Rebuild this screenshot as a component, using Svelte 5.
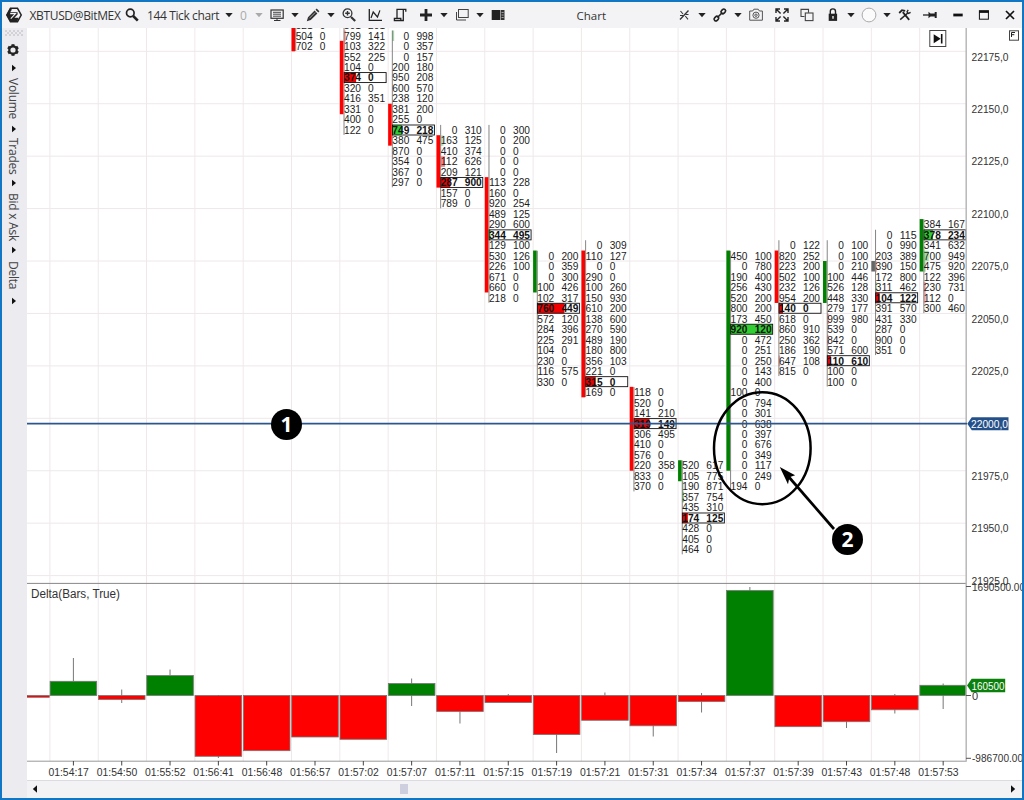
<script lang="ts">
	const ROW = 10.486;
	const STEP = 48.32;

	const colX = (i: number) => 49.9 + STEP * i;
	const rowY = (r: number) => 56.5 + ROW * r;

	// col, first row, bar [from, to, color], poc [row, fill width, color], cells "bid ask"
	const clusters = [
		{ col: 5, start: -3, bar: [-3, -1, 'red'], poc: null, cells: '521 0|504 0|702 0' },
		{ col: 6, start: -3, bar: [-1, 5, 'red'], poc: [2, 12, 'red'], cells: '801 201|799 141|103 322|552 225|104 0|374 0|320 0|416 351|331 0|400 0|122 0' },
		{ col: 7, start: -2, bar: [5, 8, 'red'], poc: [7, 9.5, 'green'], cells: '0 998|0 357|0 157|200 180|950 208|600 570|238 120|381 200|255 0|749 218|380 475|870 0|354 0|367 0|297 0' },
		{ col: 8, start: 7, bar: [8, 12, 'red'], poc: [12, 9.5, 'red'], cells: '0 310|163 125|410 374|112 626|209 121|287 900|157 0|789 0' },
		{ col: 9, start: 7, bar: [12, 22, 'red'], poc: [17, 1.5, 'green'], cells: '0 300|0 200|0 0|0 0|0 0|113 228|160 0|920 254|489 125|290 600|344 495|129 100|530 126|226 100|671 0|660 0|218 0' },
		{ col: 10, start: 19, bar: [19, 22, 'green'], poc: [24, 27, 'red'], cells: '0 200|0 359|0 300|100 426|102 317|760 449|572 120|284 396|225 291|104 0|230 0|116 575|330 0' },
		{ col: 11, start: 18, bar: [19, 32, 'red'], poc: [31, 10, 'red'], cells: '0 309|110 127|0 0|290 0|100 260|150 930|610 200|138 600|270 590|489 190|180 800|356 103|221 0|315 0|169 0' },
		{ col: 12, start: 32, bar: [32, 39, 'red'], poc: [35, 15.5, 'red'], cells: '118 0|520 0|141 210|319 149|306 495|410 0|576 0|220 358|833 0|370 0' },
		{ col: 13, start: 39, bar: [39, 40, 'green'], poc: [44, 5.5, 'red'], cells: '520 617|105 775|190 871|357 754|435 310|174 125|428 0|405 0|464 0' },
		{ col: 14, start: 19, bar: [19, 39, 'green'], poc: [26, 42, 'green'], cells: '450 100|0 780|190 400|256 430|520 200|800 200|173 450|920 120|0 472|0 251|0 250|0 143|0 400|100 0|0 794|0 301|0 638|0 397|0 676|0 349|0 117|0 249|194 0' },
		{ col: 15, start: 18, bar: [19, 23, 'red'], poc: [24, 4, 'red'], cells: '0 122|820 252|223 200|502 100|232 126|954 200|140 0|618 0|860 910|250 362|186 190|647 108|815 0' },
		{ col: 16, start: 18, bar: [20, 23, 'green'], poc: [29, 3.5, 'red'], cells: '0 100|0 100|0 210|100 446|526 128|448 330|279 177|999 980|539 0|842 0|571 600|110 610|100 0|100 0' },
		{ col: 17, start: 17, bar: [20, 20, 'gray'], poc: [23, 4, 'red'], cells: '0 115|0 990|203 389|390 150|172 800|311 462|104 122|391 570|431 330|287 0|900 0|351 0' },
		{ col: 18, start: 16, bar: [16, 20, 'green'], poc: [17, 9, 'green'], cells: '384 167|378 234|341 632|700 949|475 920|122 396|230 731|112 0|300 460' }
	].map((c) => ({
		...c,
		x: colX(c.col),
		rows: c.cells.split('|').map((s, i) => {
			const [bid, ask] = s.split(' ');
			return { r: c.start + i, bid, ask };
		})
	}));

	// weak volume shading: col, row, width, color
	const tints: [number, number, number, string][] = [
		[6, -2, 2, '#f2a0a0'], [6, -1, 1.5, '#f2a0a0'], [7, -2, 2, '#a5d5a8'],
		[8, 8, 3, '#b9e0bb'], [8, 10, 4.5, '#ff7f7f'], [13, 41, 1.5, '#a5d5a8'],
		[13, 42, 2, '#8fd092'], [15, 29, 1.5, '#f2a0a0'], [16, 25, 2, '#f5a5a5'],
		[16, 27, 1.5, '#f2a0a0'], [17, 22, 1.5, '#a5d5a8'], [17, 20, 1.5, '#f2a0a0'],
		[18, 19, 5, '#9bdc9f'], [18, 20, 2, '#a5d5a8'], [18, 22, 2, '#f2a0a0'], [18, 23, 2.5, '#f9b5b5']
	];

	const prices = ['22175,0', '22150,0', '22125,0', '22100,0', '22075,0', '22050,0', '22025,0', '', '21975,0', '21950,0', '21925,0'];

	const times = [
		'01:54:17', '01:54:50', '01:55:52', '01:56:41', '01:56:48', '01:56:57', '01:57:02',
		'01:57:07', '01:57:11', '01:57:15', '01:57:19', '01:57:21', '01:57:31', '01:57:34',
		'01:57:37', '01:57:39', '01:57:43', '01:57:48', '01:57:53'
	];

	// body end, wick top, wick bottom
	const ZERO = 695.5;
	const deltas = [
		[681.3, 658, 681], [699.5, 689.5, 703], [675.5, 669.5, 675], [756.3, 695, 758],
		[750.7, 696, 750], [737, 696, 736], [739.3, 696, 739], [683.5, 678.5, 706],
		[711.5, 696, 723.5], [702.6, 694, 702], [734.6, 696, 753], [720.3, 692.5, 720],
		[725.8, 696, 736.5], [701.6, 693, 712.5], [590.5, 587, 600], [726.7, 696, 726],
		[721.7, 696, 728], [709.8, 694, 713.5], [685.3, 683.5, 709]
	];
</script>

{#snippet caret(muted = false)}
	<svg class="caret" class:muted viewBox="0 0 8 8"><path d="M0.3 2h7.4L4 6.2z" fill="currentColor" /></svg>
{/snippet}

{#snippet sideCaret()}
	<svg class="side-caret" viewBox="0 0 8 8"><path d="M2 0.8v6.4L6 4z" fill="#111" /></svg>
{/snippet}

<div class="window">
	<header class="toolbar">
		<div class="left">
			<svg class="icon logo" viewBox="0 0 18 18">
				<path d="M5.5 2.3h7L16.2 9l-3.7 6.7h-7L1.8 9z" fill="none" stroke="#222" stroke-width="1.5" />
				<path d="M1.5 9l3.3-6.5L7 3.5 5.2 6.2h7.4v2.2l-3.2 3.4h4.2l-1.6 4.3H5.2z" fill="#222" />
				<path d="M5.2 7.6h5.3L5.8 12.6" fill="none" stroke="#f3f3f6" stroke-width="1.1" />
			</svg>
			<span class="symbol">XBTUSD@BitMEX</span>
			<svg class="icon search" viewBox="0 0 18 18" fill="none" stroke="#222">
				<circle cx="7.3" cy="7" r="3.8" stroke-width="1.7" />
				<path d="M10.2 10l4.6 4.6" stroke-width="2.6" />
			</svg>
			<span class="period">144 Tick chart</span>
			{@render caret()}
			<span class="zero">0</span>
			{@render caret(true)}
			<svg class="icon" viewBox="0 0 18 18" fill="none" stroke="#333">
				<rect x="3" y="4" width="12.2" height="8.3" stroke-width="1.2" />
				<path d="M5 6.3h8M5 8.2h8M5 10.2h8" stroke-width="0.9" />
				<path d="M9 12.5v1.7M6 14.5h6.5" />
			</svg>
			{@render caret()}
			<svg class="icon" viewBox="0 0 18 18">
				<path d="M2.8 15.2l1.2-4 6.6-6.6 2.8 2.8-6.6 6.6zM11.5 3.7l1.2-1.1 2.7 2.7-1.1 1.2z" fill="#333" />
				<path d="M5.5 12.2l5.7-5.7" stroke="#bbb" stroke-width="0.8" />
			</svg>
			{@render caret()}
			<svg class="icon" viewBox="0 0 18 18" fill="none" stroke="#333">
				<circle cx="7.5" cy="7.3" r="4.4" stroke-width="1.3" />
				<path d="M11 11l4.2 4" stroke-width="2.2" />
				<path d="M5.2 7.3h4.6M7.5 5v4.6" stroke-width="1.4" />
			</svg>
			<svg class="icon" viewBox="0 0 18 18" fill="none" stroke="#222">
				<path d="M3.3 3v11.3H16" stroke-width="1.3" />
				<path d="M5 12l2.2-6 4.3 5 2.4-6.6" stroke-width="1.2" />
			</svg>
			<svg class="icon" viewBox="0 0 18 18" fill="none" stroke="#222" stroke-width="1.3">
				<path d="M6 12V3.4h8.8v2.4M12.3 3.5v11H3.4v-2.2h6.4v2.2" />
			</svg>
			<svg class="icon" viewBox="0 0 18 18"><path d="M9 3v12M3 9h12" stroke="#222" stroke-width="2.8" /></svg>
			{@render caret()}
			<svg class="icon" viewBox="0 0 18 18" fill="none" stroke="#444">
				<rect x="5.5" y="3.5" width="9.7" height="8" />
				<path d="M3.5 6v8h9.5" stroke-width="1" />
			</svg>
			{@render caret()}
			<svg class="icon" viewBox="0 0 18 18">
				<rect x="2.7" y="4" width="8.6" height="10" fill="#222" />
				<rect x="11.8" y="4" width="3.7" height="10" fill="#333" />
				<path d="M12.5 6.5h2.2M12.5 9h2.2M12.5 11.5h2.2" stroke="#bbb" stroke-width="0.8" />
			</svg>
		</div>

		<div class="title">Chart</div>

		<div class="right">
			<svg class="icon" viewBox="0 0 18 18" fill="none" stroke="#333">
				<path d="M5 13.5l8.5-9" stroke-width="1.3" />
				<path d="M5.5 5l2.5 3M10.3 10l2.7 3.3M5 9.5h3M10.5 8.5h3" stroke-width="1.1" />
			</svg>
			{@render caret()}
			<svg class="icon" viewBox="0 0 18 18" fill="none" stroke="#222" stroke-width="1.6">
				<rect x="9.8" y="3.6" width="5" height="3.6" rx="1.8" transform="rotate(-45 12.3 5.4)" />
				<rect x="2.9" y="10.8" width="5" height="3.6" rx="1.8" transform="rotate(-45 5.4 12.6)" />
				<path d="M6.5 11.5l4.8-5" />
			</svg>
			{@render caret()}
			<svg class="icon" viewBox="0 0 18 18" fill="none" stroke="#555">
				<path d="M2.7 5h3l1.2-1.8h4.3L12.4 5h3v9.2H2.7z" />
				<circle cx="9" cy="9.2" r="3.1" />
				<circle cx="9" cy="9.2" r="1.2" />
			</svg>
			<svg class="icon" viewBox="0 0 18 18" fill="none" stroke="#222" stroke-width="1.4">
				<path d="M3 7V3h4M11 3h4v4M15 11v4h-4M7 15H3v-4M3 3l4.6 4.6M15 3l-4.6 4.6M15 15l-4.6-4.6M3 15l4.6-4.6" />
			</svg>
			<svg class="icon" viewBox="0 0 18 18" fill="none" stroke="#444" stroke-width="1.1">
				<path d="M6.5 10.5H3V3.4h7.5v3.3" />
				<rect x="7.3" y="7" width="7.7" height="7.6" />
			</svg>
			<svg class="icon lock" viewBox="0 0 18 18">
				<path d="M6.3 8V5.5a2.6 2.6 0 0 1 5.2 0V8" fill="none" stroke="#222" stroke-width="1.4" />
				<rect x="4.7" y="7.7" width="8.4" height="7.2" fill="#222" />
				<path d="M9 10v2.8" stroke="#fff" stroke-width="1.3" />
			</svg>
			{@render caret()}
			<svg class="icon" viewBox="0 0 18 18"><circle cx="9" cy="9" r="6.9" fill="#fbfbfc" stroke="#aaa" /></svg>
			{@render caret()}
			<svg class="icon" viewBox="0 0 18 18" fill="none" stroke="#222">
				<path d="M3.2 7l2.8-2.8 3.2.6M6.8 6.2l6.4 7.6" stroke-width="1.8" />
				<path d="M4.2 13.6l7.6-6.6" stroke-width="1.5" />
				<path d="M14.6 6.4l-2 1-1.6-1.5 1.2-2" stroke-width="1.3" />
			</svg>
			<svg class="icon pin" viewBox="0 0 18 18">
				<path d="M2 9h7" stroke="#222" stroke-width="1.3" />
				<path d="M7.5 5.8l2 1.6h4.2V6.1h2v5.8h-2v-1.3H9.5l-2 1.6z" fill="#222" />
			</svg>
			<svg class="icon win" viewBox="0 0 18 18"><path d="M4.3 9h9.4" stroke="#111" stroke-width="2.8" /></svg>
			<svg class="icon win" viewBox="0 0 18 18">
				<rect x="4.4" y="4.8" width="9" height="8.4" fill="none" stroke="#111" />
				<path d="M4 5.7h10" stroke="#111" stroke-width="2.4" />
			</svg>
			<svg class="icon win" viewBox="0 0 18 18"><path d="M5 5l8 8M13 5l-8 8" stroke="#111" stroke-width="1.7" /></svg>
		</div>
	</header>

	<div class="body">
		<aside class="sidebar">
			<svg class="grip" viewBox="0 0 18 7">
				{#each [0, 4, 8, 12, 16] as x}
					<path d="M{x + 0.5} 1h1M{x + 2.5} 3h1M{x + 0.5} 5h1" stroke="#888" />
				{/each}
			</svg>
			<svg class="gear" viewBox="0 0 14 14">
				<circle cx="7" cy="7" r="3.7" fill="none" stroke="#222" stroke-width="2.2" />
				{#each [0, 60, 120, 180, 240, 300] as a}
					<rect x="5.5" y="1.2" width="3" height="2" fill="#222" transform="rotate({a} 7 7)" />
				{/each}
			</svg>
			{@render sideCaret()}
			<span style:height="56px">Volume</span>
			{@render sideCaret()}
			<span style:height="49px">Trades</span>
			{@render sideCaret()}
			<span style:height="62px">Bid x Ask</span>
			{@render sideCaret()}
			<span style:height="46px">Delta</span>
			{@render sideCaret()}
		</aside>

		<main>
			<svg class="chart" viewBox="27 28 995 752" width="995" height="752">
				<rect x="27" y="28" width="995" height="752" fill="#fff" />

				<!-- grid -->
				{#each times as _, i}
					<path d="M{colX(i)} 28V761" class="grid" />
				{/each}
				{#each prices as _, i}
					<path d="M27 {51.3 + i * ROW * 5}H966" class="grid" />
				{/each}

				<!-- footprint clusters -->
				{#each tints as [c, r, w, color]}
					<rect x={colX(c) + 4} y={rowY(r) - 5} width={w} height="10.5" fill={color} />
				{/each}
				{#each clusters as c}
					<path d="M{c.x + 4.2} {rowY(c.start) - 5}V{rowY(c.start + c.rows.length - 1) + 5}" class="spine" />
					<rect x={c.x} y={rowY(+c.bar[0]) - 5.2} width="3.6" height={(+c.bar[1] - +c.bar[0] + 1) * ROW} class={c.bar[2]} />
					{#if c.poc}
						<rect x={c.x + 4.3} y={rowY(+c.poc[0]) - 4.9} width={c.poc[1]} height="10" class="poc-{c.poc[2]}" />
						<rect x={c.x + 4.3} y={rowY(+c.poc[0]) - 4.9} width="42" height="10" class="poc-box" />
					{/if}
					{#each c.rows as row}
						<g class="cell" class:bold={c.poc && c.poc[0] === row.r}>
							<text x={row.bid === '0' ? c.x + 15.3 : c.x + 4.2} y={rowY(row.r) + 4} textLength={row.bid.length * 5.65} lengthAdjust="spacingAndGlyphs">{row.bid}</text>
							<text x={c.x + 28.3} y={rowY(row.r) + 4} textLength={row.ask.length * 5.65} lengthAdjust="spacingAndGlyphs">{row.ask}</text>
						</g>
					{/each}
				{/each}

				<!-- delta panel -->
				<path d="M27 583.4H966" stroke="#888" />
				<text x="31" y="598" class="label" textLength="89" lengthAdjust="spacingAndGlyphs">Delta(Bars, True)</text>
				<rect x="27" y="695.5" width="22.3" height="1.8" fill="#d11" stroke="#855" stroke-width="0.6" />
				{#each deltas as [end, top, bottom], i}
					<path d="M{colX(i) + 23.5} {top}V{bottom}" class="wick" />
					<rect x={colX(i) + 0.2} y={Math.min(end, ZERO)} width={i === 18 ? 46.1 : 46.6} height={Math.abs(end - ZERO)} class="delta {end < ZERO ? 'green' : 'red'}" />
				{/each}

				<!-- axes -->
				<path d="M27 761.2H966.5" stroke="#999" />
				<path d="M966.2 28V761.5" stroke="#b8b8b8" stroke-width="1.5" />
				{#each times as t, i}
					<path d="M{colX(i) + 23.5} 761V765.5" stroke="#444" />
					<text x={colX(i) - 1.5} y="776.3" class="axis" textLength="40.5" lengthAdjust="spacingAndGlyphs">{t}</text>
				{/each}
				{#each prices as p, i}
					{#if p}
						<text x="971.5" y={rowY(i * 5) + 4.1} class="axis" textLength="37" lengthAdjust="spacingAndGlyphs">{p}</text>
					{/if}
				{/each}
				<path d="M966 586.5h5M966 695.5h5M966 758.3h5" stroke="#555" />
				<text x="972" y="590.7" class="axis" textLength="53" lengthAdjust="spacingAndGlyphs">1690500.00</text>
				<text x="972" y="699.5" class="axis">0</text>
				<text x="972" y="762.3" class="axis" textLength="51" lengthAdjust="spacingAndGlyphs">-986700.00</text>
				<path d="M967 685.5l4.7-6.8h33.5v13.6h-33.5z" fill="#0c800c" />
				<text x="971.5" y="689.7" class="tag" textLength="33" lengthAdjust="spacingAndGlyphs">160500</text>

				<!-- price level -->
				<path d="M27 423.6H967" stroke="#2d568c" stroke-width="1.9" />
				<path d="M967.3 423.7l4.5-6.5h36.7v13h-36.7z" fill="#24508a" />
				<text x="971" y="428" class="tag" textLength="37" lengthAdjust="spacingAndGlyphs">22000,0</text>

				<!-- markers -->
				<ellipse cx="762.3" cy="448.2" rx="48.3" ry="56" fill="none" stroke="#000" stroke-width="2.5" />
				<path d="M834 529L788 476" stroke="#000" stroke-width="2.7" />
				<path d="M779.8 467l15.3 8.3-5.7 2-1.4 7z" fill="#000" />
				<circle cx="286.5" cy="424.5" r="15.5" />
				<text x="286.5" y="432" class="marker">1</text>
				<circle cx="847.5" cy="539.5" r="15.5" />
				<text x="847.5" y="547" class="marker">2</text>

				<rect x="929.8" y="30.5" width="16" height="16" fill="#fff" stroke="#444" />
				<path d="M933.7 34.3v9l7-4.5z" fill="#111" />
				<path d="M941.7 34v9.5" stroke="#111" stroke-width="1.6" />
				<rect x="1009.5" y="30.8" width="9" height="9.4" fill="#fff" stroke="#444" />
				<path d="M1011.5 37v-4.5h3.5M1011.5 34.7h2.8" fill="none" stroke="#222" />
			</svg>

			<div class="scrollbar">
				<svg viewBox="0 0 6 8"><path d="M5 0.3v7.4L0.8 4z" fill="#111" /></svg>
				<div class="track"><div class="thumb"></div></div>
				<svg viewBox="0 0 6 8"><path d="M1 0.3v7.4L5.2 4z" fill="#111" /></svg>
			</div>
		</main>
	</div>
</div>

<style>
	:global(body) {
		margin: 0;
	}

	.window {
		box-sizing: border-box;
		width: 1024px;
		height: 800px;
		border: 2px solid #1177c4;
		background: #f3f3f6;
		display: flex;
		flex-direction: column;
		overflow: hidden;
		font-family: 'Open Sans', 'Noto Sans', sans-serif;
		color: #333;
	}

	.toolbar {
		height: 26px;
		flex: none;
		display: flex;
		align-items: center;
		font-size: 12px;
		white-space: nowrap;
	}

	.left,
	.right {
		display: flex;
		align-items: center;
	}

	.left {
		box-sizing: border-box;
		width: 505.5px;
		padding-left: 3px;
	}

	.title {
		width: 167.5px;
		text-align: center;
		font-size: 11.5px;
	}

	.icon {
		width: 18px;
		height: 18px;
		flex: none;
	}

	.icon + .icon {
		margin-left: 7.5px;
	}

	.caret {
		width: 8px;
		height: 8px;
		margin: 0 5px;
		flex: none;
		color: #222;
	}

	.caret.muted {
		color: #aaa;
	}

	.symbol {
		width: 92px;
		margin-left: 6.5px;
		letter-spacing: -0.35px;
	}

	.search {
		margin-left: 1.5px;
	}

	.period {
		width: 73px;
		margin-left: 6px;
		letter-spacing: -0.38px;
	}

	.zero {
		width: 7px;
		margin: 0 3px 0 2px;
		color: #aaa;
	}

	.right .pin {
		margin-left: 7px;
	}

	.right .win {
		margin-left: 8px;
	}

	.right .pin + .win {
		margin-left: 10px;
	}

	.body {
		flex: 1;
		display: flex;
		min-height: 0;
	}

	.sidebar {
		width: 25px;
		flex: none;
		background: #ebebf0;
		display: flex;
		flex-direction: column;
		align-items: center;
		font-size: 12px;
		color: #444;
	}

	.sidebar span {
		writing-mode: vertical-rl;
		box-sizing: border-box;
		flex: none;
		width: 16px;
		line-height: 16px;
		text-align: center;
		margin: -1.5px 4px -1.5px 0;
		white-space: nowrap;
		letter-spacing: -0.25px;
	}

	.grip {
		width: 18px;
		height: 7px;
		margin: 2px 2px 0 0;
		flex: none;
	}

	.gear {
		width: 14px;
		height: 14px;
		margin: 6px 4px 7px 0;
		flex: none;
	}

	.side-caret {
		width: 8px;
		height: 8px;
		margin-right: 2px;
		flex: none;
	}

	main {
		flex: 1;
		display: flex;
		flex-direction: column;
		min-width: 0;
	}

	.chart {
		display: block;
		flex: none;
		font-family: 'Liberation Sans', Arial, sans-serif;
	}

	.grid {
		stroke: #efe8ea;
	}

	.spine {
		stroke: #777;
		stroke-width: 0.9;
	}

	.red {
		fill: #f00;
	}

	.green {
		fill: #008000;
	}

	.gray {
		fill: #666;
	}

	.poc-red {
		fill: #f00000;
	}

	.poc-green {
		fill: #32cd32;
	}

	.poc-box {
		fill: none;
		stroke: #111;
		stroke-width: 0.9;
	}

	.cell {
		font-size: 11.2px;
		fill: #1c1c1c;
	}

	.cell.bold {
		font-weight: bold;
		fill: #111;
	}

	.label {
		font-size: 12px;
		fill: #333;
	}

	.wick {
		stroke: #777;
	}

	.delta {
		stroke: #777;
		stroke-width: 0.8;
	}

	.axis {
		font-size: 11px;
		fill: #333;
	}

	.tag {
		font-size: 11px;
		fill: #fff;
	}

	.marker {
		font-family: 'Open Sans', 'Noto Sans', sans-serif;
		font-size: 21px;
		font-weight: bold;
		fill: #fff;
		text-anchor: middle;
	}

	.scrollbar {
		flex: 1;
		border-top: 1px solid #dcdce0;
		display: flex;
		align-items: center;
		padding: 0 6px 2px 5px;
	}

	.scrollbar svg {
		width: 6px;
		height: 8px;
	}

	.track {
		flex: 1;
	}

	.thumb {
		width: 8px;
		height: 10px;
		margin-left: 362px;
		background: #cdcfde;
	}
</style>
